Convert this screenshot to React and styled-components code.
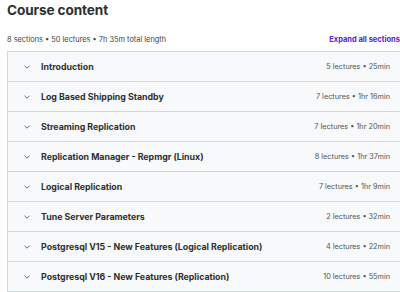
import React from "react";
import styled, { createGlobalStyle } from "styled-components";

const GlobalStyle = createGlobalStyle`
  html, body {
    margin: 0;
    padding: 0;
    background: #ffffff;
    overflow: hidden;
  }
  body {
    font-family: Inter, "Noto Sans", sans-serif;
    color: #2d2f31;
  }
`;

const sections = [
  { title: "Introduction", lectures: 5, length: "25min" },
  { title: "Log Based Shipping Standby", lectures: 7, length: "1hr 16min" },
  { title: "Streaming Replication", lectures: 7, length: "1hr 20min" },
  { title: "Replication Manager - Repmgr (Linux)", lectures: 8, length: "1hr 37min" },
  { title: "Logical Replication", lectures: 7, length: "1hr 9min" },
  { title: "Tune Server Parameters", lectures: 2, length: "32min" },
  { title: "Postgresql V15 - New Features (Logical Replication)", lectures: 4, length: "22min" },
  { title: "Postgresql V16 - New Features (Replication)", lectures: 10, length: "55min" }
];

function Chevron() {
  return (
    <svg width="8" height="8" viewBox="0 0 8 8" fill="none">
      <path d="M1.8 3 L4 5.2 L6.2 3" stroke="#6a6f73" strokeWidth="1" strokeLinecap="round" strokeLinejoin="round" />
    </svg>
  );
}

export default function App() {
  return (
    <Page>
      <GlobalStyle />
      <Title>Course content</Title>
      <SummaryBar>
        <Summary>8 sections • 50 lectures • 7h 35m total length</Summary>
        <ExpandLink>Expand all sections</ExpandLink>
      </SummaryBar>
      <SectionList>
        {sections.map((s) => (
          <SectionRow key={s.title}>
            <ChevronBox>
              <Chevron />
            </ChevronBox>
            <SectionTitle>{s.title}</SectionTitle>
            <SectionMeta>
              {s.lectures} lectures • {s.length}
            </SectionMeta>
          </SectionRow>
        ))}
      </SectionList>
    </Page>
  );
}

const Page = styled.div`
  width: 393px;
  padding: 0 0 0 7px;
`;

const Title = styled.h2`
  margin: 0;
  font-size: 13.6px;
  font-weight: 700;
  letter-spacing: -0.1px;
  line-height: 21px;
  color: #2d2f31;
`;

const SummaryBar = styled.div`
  display: flex;
  align-items: center;
  justify-content: space-between;
  margin-top: 12px;
  height: 12px;
  margin-bottom: 6px;
`;

const Summary = styled.span`
  font-size: 7.4px;
  color: #3e4143;
`;

const ExpandLink = styled.span`
  font-size: 7.5px;
  font-weight: 700;
  color: #5624d0;
  white-space: nowrap;
`;

const SectionList = styled.div`
  border: 1px solid #d1d7dc;
  border-right: none;
`;

const SectionRow = styled.div`
  display: flex;
  align-items: center;
  height: 29px;
  padding: 0 10px 0 15px;
  background: #f7f9fa;
  border-bottom: 1px solid #d1d7dc;
  &:last-child {
    border-bottom: none;
  }
`;

const ChevronBox = styled.span`
  display: flex;
  width: 18px;
`;

const SectionTitle = styled.span`
  flex: 1;
  font-size: 8.8px;
  font-weight: 700;
  color: #2d2f31;
  white-space: nowrap;
`;

const SectionMeta = styled.span`
  font-size: 7.3px;
  color: #505457;
  white-space: nowrap;
`;
